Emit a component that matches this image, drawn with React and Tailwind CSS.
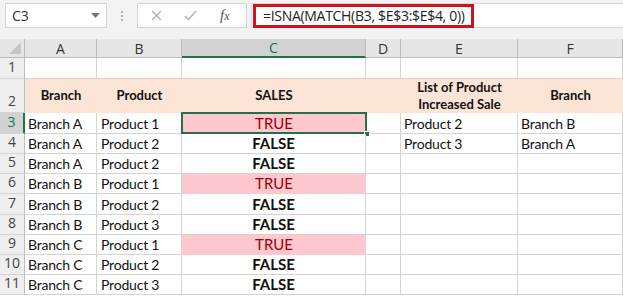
import React from "react";

const cols = [
  { key: "A", w: "w-[72px]" },
  { key: "B", w: "w-[85px]" },
  { key: "C", w: "w-[184px]" },
  { key: "D", w: "w-[35px]" },
  { key: "E", w: "w-[117px]" },
  { key: "F", w: "w-[105px]" },
];

const data = [
  ["Branch A", "Product 1", true, "Product 2", "Branch B"],
  ["Branch A", "Product 2", false, "Product 3", "Branch A"],
  ["Branch A", "Product 2", false, "", ""],
  ["Branch B", "Product 1", true, "", ""],
  ["Branch B", "Product 2", false, "", ""],
  ["Branch B", "Product 3", false, "", ""],
  ["Branch C", "Product 1", true, "", ""],
  ["Branch C", "Product 2", false, "", ""],
  ["Branch C", "Product 3", false, "", ""],
];

const cellFont = { fontFamily: "Lato, 'Open Sans', sans-serif" };

function RowHead({ n, h, active }) {
  return (
    <div
      className={`w-[25px] shrink-0 ${h} flex items-end justify-center pb-[1px] border-b border-[#d4d4d4] ${
        active ? "bg-[#d2d2d2] text-[#217346] border-r-2 border-r-[#217346]" : "bg-[#efefef] text-[#444] border-r border-r-[#bdbdbd]"
      } text-[14px]`}
      style={{ fontFamily: "'Open Sans', 'Noto Sans', sans-serif" }}
    >
      {n}
    </div>
  );
}

export default function App() {
  const txt = "text-[14px] tracking-[-0.2px] text-[#111] leading-[19px]";
  return (
    <div className="w-[623px] h-[296px] bg-white overflow-hidden">
      {/* Toolbar */}
      <div className="h-[39px] bg-[#f3f3f3] flex items-start pt-[3px]">
        <div className="ml-[5px] w-[102px] h-[25px] bg-white border border-[#d6d6d6] flex items-center justify-between pl-[6px] pr-[6px]">
          <span className="text-[14px] text-[#333]" style={{ fontFamily: "'Open Sans', 'Noto Sans', sans-serif" }}>C3</span>
          <svg width="9" height="5" viewBox="0 0 9 5"><path d="M0 0h9L4.5 5z" fill="#777" /></svg>
        </div>
        <div className="w-[30px] h-[25px] flex flex-col items-center justify-center gap-[2px]">
          <span className="w-[2px] h-[2px] bg-[#b0b0b0]" />
          <span className="w-[2px] h-[2px] bg-[#b0b0b0]" />
          <span className="w-[2px] h-[2px] bg-[#b0b0b0]" />
        </div>
        <div className="w-[110px] h-[25px] bg-white border border-[#d6d6d6] flex items-center">
          <svg className="ml-[13px]" width="11" height="11" viewBox="0 0 11 11">
            <path d="M1 1L10 10M10 1L1 10" stroke="#b4b4b4" strokeWidth="1.4" />
          </svg>
          <svg className="ml-[22px]" width="13" height="11" viewBox="0 0 13 11">
            <path d="M1 6L4.5 9.5L12 1" stroke="#b4b4b4" strokeWidth="1.6" fill="none" />
          </svg>
          <span className="ml-[23px] text-[15px] italic text-[#555]" style={{ fontFamily: "'Liberation Serif', serif" }}>
            f<span className="text-[12px]">x</span>
          </span>
        </div>
        <div className="ml-[4px] flex-1 h-[25px] bg-white border-y border-l border-[#d6d6d6] relative">
          <div className="absolute left-[1px] top-[0px] w-[221px] h-[24px] border-[3px] border-[#d0121e]" />
          <span
            className="absolute left-[11px] top-[1px] text-[14px] tracking-[-0.3px] text-[#222] whitespace-nowrap"
            style={{ fontFamily: "'Open Sans', 'Noto Sans', sans-serif" }}
          >
            =ISNA(MATCH(B3, $E$3:$E$4, 0))
          </span>
        </div>
      </div>

      {/* Column headers */}
      <div className="flex h-[19px]">
        <div className="w-[25px] shrink-0 bg-[#e6e6e6] border-r border-b border-[#bdbdbd] relative">
          <svg className="absolute right-[3px] bottom-[3px]" width="12" height="12" viewBox="0 0 12 12">
            <path d="M12 0V12H0z" fill="#c6c6c6" />
          </svg>
        </div>
        {cols.map((c) => (
          <div
            key={c.key}
            className={`${c.w} shrink-0 flex items-center justify-center text-[14px] ${
              c.key === "C"
                ? "bg-[#d2d2d2] text-[#217346] border-b-2 border-b-[#217346] border-r border-r-[#bdbdbd]"
                : "bg-[#e6e6e6] text-[#333] border-b border-r border-[#bdbdbd]"
            }`}
            style={{ fontFamily: "'Open Sans', 'Noto Sans', sans-serif" }}
          >
            {c.key}
          </div>
        ))}
      </div>

      {/* Row 1 */}
      <div className="flex">
        <RowHead n={1} h="h-[21px]" />
        {cols.map((c) => (
          <div key={c.key} className={`${c.w} shrink-0 h-[21px] border-r border-b border-[#d4d4d4]`} />
        ))}
      </div>

      {/* Row 2 */}
      <div className="flex">
        <RowHead n={2} h="h-[34px]" />
        <div className="flex bg-[#fce4d6] text-[13px] font-bold text-[#111]" style={cellFont}>
          <div className="w-[72px] h-[34px] flex items-center justify-center">Branch</div>
          <div className="w-[85px] h-[34px] flex items-center justify-center">Product</div>
          <div className="w-[184px] h-[34px] flex items-center justify-center">SALES</div>
          <div className="w-[35px] h-[34px]" />
          <div className="w-[117px] h-[34px] flex flex-col items-center justify-center leading-[17px] text-center">
            <span>List of Product</span>
            <span>Increased Sale</span>
          </div>
          <div className="w-[105px] h-[34px] flex items-center justify-center">Branch</div>
        </div>
      </div>

      {/* Data rows */}
      {data.map((r, i) => {
        const n = i + 3;
        const h = n === 3 || n === 7 ? "h-[21px]" : "h-[20px]";
        const sel = n === 3;
        return (
          <div key={n} className="flex">
            <RowHead n={n} h={h} active={sel} />
            <div className={`w-[72px] shrink-0 ${h} border-r border-b border-[#d4d4d4] flex items-end pl-[3px] ${txt}`} style={cellFont}>
              {r[0]}
            </div>
            <div className={`w-[85px] shrink-0 ${h} border-r border-b border-[#d4d4d4] flex items-end pl-[4px] ${txt}`} style={cellFont}>
              {r[1]}
            </div>
            <div
              className={`w-[184px] shrink-0 ${h} relative flex items-end justify-center text-[15px] leading-[19px] ${
                r[2] ? "bg-[#ffc7ce] text-[#9c0006] border-b border-b-[#ffc7ce]" : "text-[#111] font-bold border-r border-b border-[#d4d4d4]"
              }`}
              style={cellFont}
            >
              {r[2] ? "TRUE" : "FALSE"}
              {sel && (
                <>
                  <div className="absolute -left-[1px] -top-[1px] -right-[1px] -bottom-[1px] border-2 border-[#217346]" />
                  <div className="absolute -right-[4px] -bottom-[4px] w-[6px] h-[6px] bg-[#217346] border border-white" />
                </>
              )}
            </div>
            <div className={`w-[35px] shrink-0 ${h} border-r border-b border-[#d4d4d4]`} />
            <div className={`w-[117px] shrink-0 ${h} border-r border-b border-[#d4d4d4] flex items-end pl-[3px] ${txt}`} style={cellFont}>
              {r[3]}
            </div>
            <div className={`w-[105px] shrink-0 ${h} border-r border-b border-[#d4d4d4] flex items-end pl-[3px] ${txt}`} style={cellFont}>
              {r[4]}
            </div>
          </div>
        );
      })}
    </div>
  );
}
